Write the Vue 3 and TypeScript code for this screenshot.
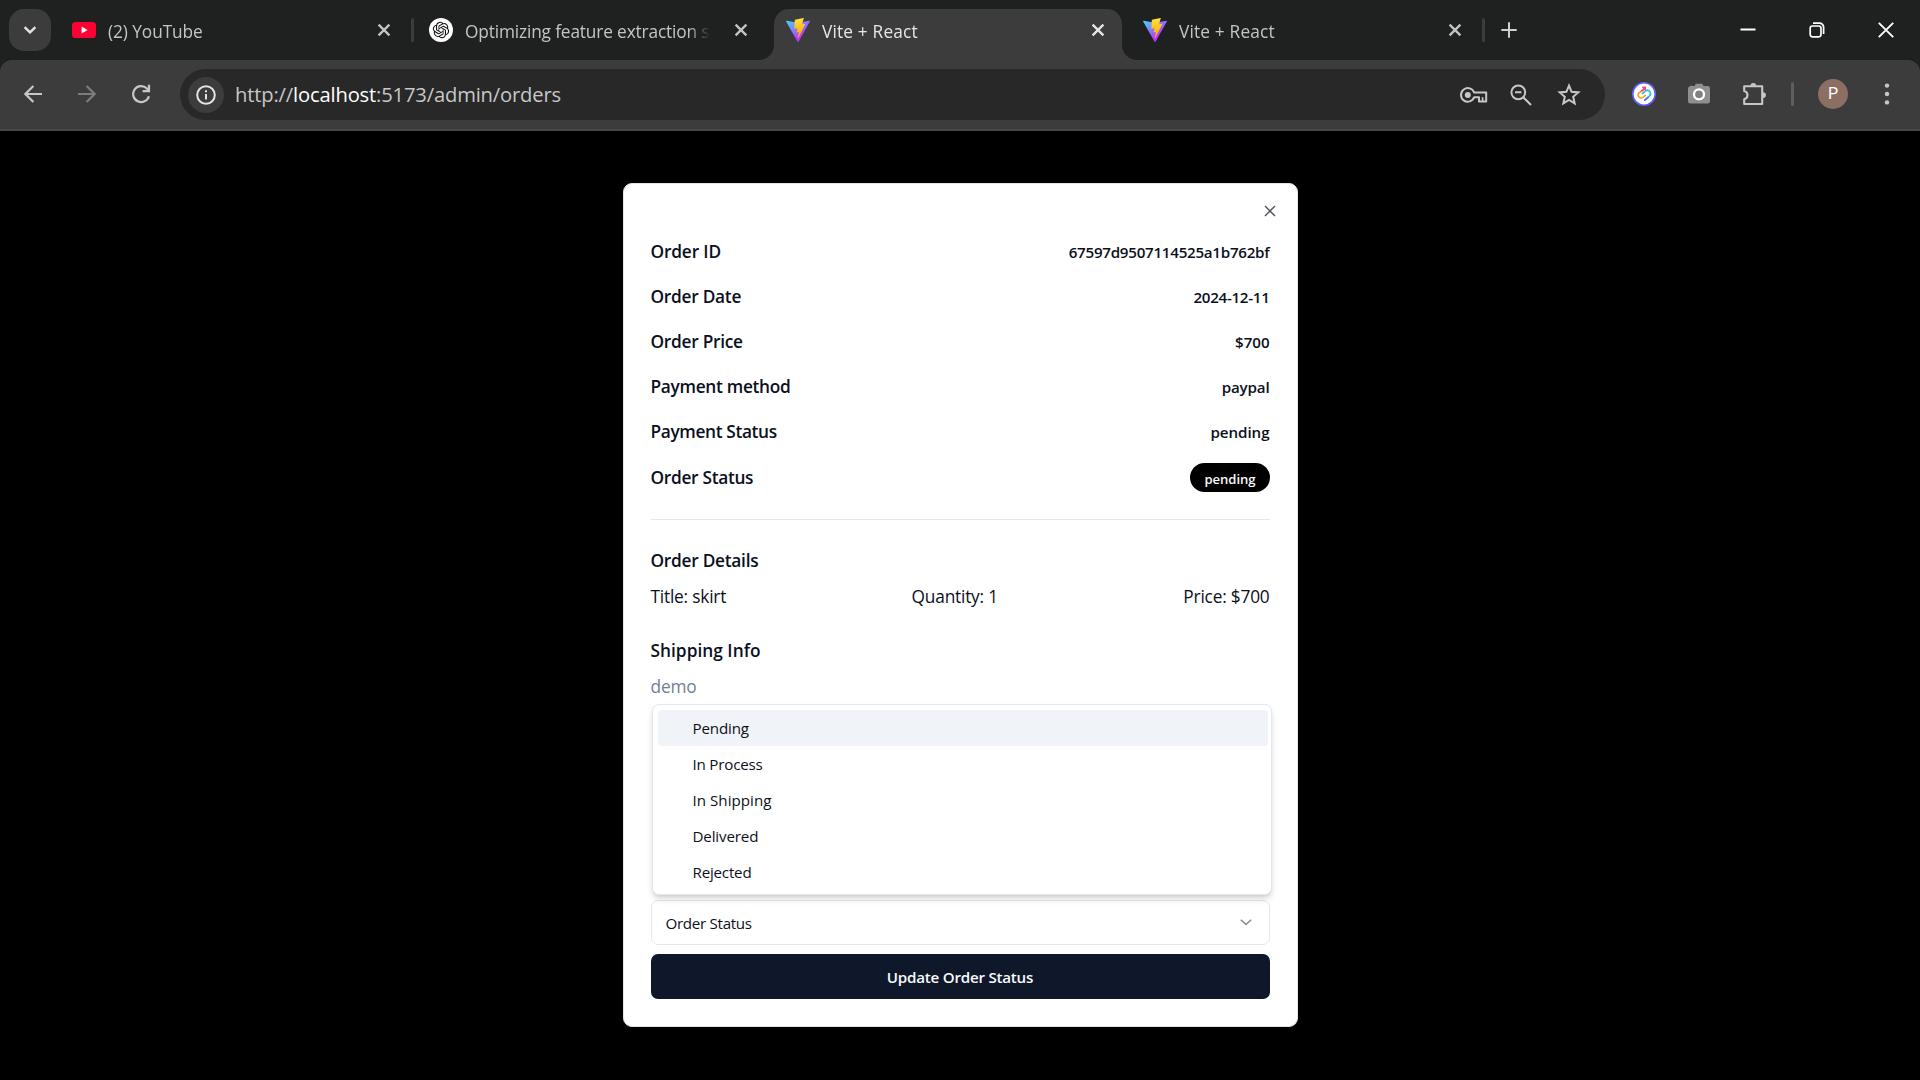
<script setup lang="ts">
type Icon = 'youtube' | 'openai' | 'vite'
interface Tab {
  title: string
  icon: Icon
  active?: boolean
  separator?: boolean
  track: string
}
interface Row {
  label: string
  value: string
  labelTrack: string
  valueTrack: string
}

const tabs: Tab[] = [
  { title: '(2) YouTube', icon: 'youtube', separator: true, track: 'track-10' },
  { title: 'Optimizing feature extraction speed', icon: 'openai', track: 'track-15' },
  { title: 'Vite + React', icon: 'vite', active: true, track: 'track-wide' },
  { title: 'Vite + React', icon: 'vite', separator: true, track: 'track-wide' },
]

const rows: Row[] = [
  { label: 'Order ID', value: '67597d9507114525a1b762bf', labelTrack: 'track-15', valueTrack: 'track-25' },
  { label: 'Order Date', value: '2024-12-11', labelTrack: 'track-25', valueTrack: 'track-30' },
  { label: 'Order Price', value: '$700', labelTrack: 'track-25', valueTrack: 'track-5' },
  { label: 'Payment method', value: 'paypal', labelTrack: 'track-30', valueTrack: 'track-15' },
  { label: 'Payment Status', value: 'pending', labelTrack: 'track-35', valueTrack: 'track-5' },
]

const options = [
  { text: 'Pending', track: 'track-15' },
  { text: 'In Process', track: 'track-20' },
  { text: 'In Shipping', track: 'track-0' },
  { text: 'Delivered', track: 'track-15' },
  { text: 'Rejected', track: 'track-20' },
]
</script>

<template>
  <div class="browser">
    <header class="tab-strip">
      <div class="tab-search">
        <svg width="14" height="8" viewBox="0 0 14 8"><path d="M1.6 1.2 7 6.4l5.4-5.2" fill="none" stroke="#e3e3e3" stroke-width="2.4" /></svg>
      </div>
      <div class="tabs">
        <div v-for="(tab, i) in tabs" :key="i" class="tab" :class="{ active: tab.active }">
          <svg v-if="tab.icon === 'youtube'" class="favicon" viewBox="0 0 24 24">
            <rect x="0" y="4" width="24" height="16" rx="3.6" fill="#ff0033" />
            <path d="M9.6 8.6v6.8l6-3.4z" fill="#fff" />
          </svg>
          <svg v-else-if="tab.icon === 'openai'" class="favicon" viewBox="0 0 24 24">
            <circle cx="12" cy="12" r="12" fill="#fff" />
            <path transform="translate(3.8 3.8) scale(.683)" fill="#111" d="M22.2819 9.8211a5.9847 5.9847 0 0 0-.5157-4.9108 6.0462 6.0462 0 0 0-6.5098-2.9A6.0651 6.0651 0 0 0 4.9807 4.1818a5.9847 5.9847 0 0 0-3.9977 2.9 6.0462 6.0462 0 0 0 .7427 7.0966 5.98 5.98 0 0 0 .511 4.9107 6.051 6.051 0 0 0 6.5146 2.9001A5.9847 5.9847 0 0 0 13.2599 24a6.0557 6.0557 0 0 0 5.7718-4.2058 5.9894 5.9894 0 0 0 3.9977-2.9001 6.0557 6.0557 0 0 0-.7475-7.0729zm-9.022 12.6081a4.4755 4.4755 0 0 1-2.8764-1.0408l.1419-.0804 4.7783-2.7582a.7948.7948 0 0 0 .3927-.6813v-6.7369l2.02 1.1686a.071.071 0 0 1 .038.052v5.5826a4.504 4.504 0 0 1-4.4945 4.4944zm-9.6607-4.1254a4.4708 4.4708 0 0 1-.5346-3.0137l.142.0852 4.783 2.7582a.7712.7712 0 0 0 .7806 0l5.8428-3.3685v2.3324a.0804.0804 0 0 1-.0332.0615L9.74 19.9502a4.4992 4.4992 0 0 1-6.1408-1.6464zM2.3408 7.8956a4.485 4.485 0 0 1 2.3655-1.9728V11.6a.7664.7664 0 0 0 .3879.6765l5.8144 3.3543-2.0201 1.1685a.0757.0757 0 0 1-.071 0l-4.8303-2.7865A4.504 4.504 0 0 1 2.3408 7.872zm16.5963 3.8558L13.1038 8.364 15.1192 7.2a.0757.0757 0 0 1 .071 0l4.8303 2.7913a4.4944 4.4944 0 0 1-.6765 8.1042v-5.6772a.79.79 0 0 0-.407-.667zm2.0107-3.0231l-.142-.0852-4.7735-2.7818a.7759.7759 0 0 0-.7854 0L9.409 9.2297V6.8974a.0662.0662 0 0 1 .0284-.0615l4.8303-2.7866a4.4992 4.4992 0 0 1 6.6802 4.66zM8.3065 12.863l-2.02-1.1638a.0804.0804 0 0 1-.038-.0567V6.0742a4.4992 4.4992 0 0 1 7.3757-3.4537l-.142.0805L8.704 5.459a.7948.7948 0 0 0-.3927.6813zm1.0976-2.3654l2.602-1.4998 2.6069 1.4998v2.9994l-2.5974 1.4997-2.6067-1.4997Z" />
          </svg>
          <svg v-else class="favicon" viewBox="0 0 256 257">
            <defs>
              <linearGradient :id="`va${i}`" x1="-.828%" x2="57.636%" y1="7.652%" y2="78.411%">
                <stop offset="0%" stop-color="#41d1ff" />
                <stop offset="100%" stop-color="#bd34fe" />
              </linearGradient>
              <linearGradient :id="`vb${i}`" x1="43.376%" x2="50.316%" y1="2.242%" y2="89.03%">
                <stop offset="0%" stop-color="#ffea83" />
                <stop offset="8.333%" stop-color="#ffdd35" />
                <stop offset="100%" stop-color="#ffa800" />
              </linearGradient>
            </defs>
            <path :fill="`url(#va${i})`" d="M255.153 37.938L134.897 252.976c-2.483 4.44-8.862 4.466-11.382.048L.875 37.958c-2.746-4.814 1.371-10.646 6.827-9.67l120.385 21.517a6.537 6.537 0 0 0 2.322-.004l117.867-21.483c5.438-.991 9.574 4.796 6.877 9.62Z" />
            <path :fill="`url(#vb${i})`" d="M185.432.063L96.44 17.501a3.268 3.268 0 0 0-2.634 3.014l-5.474 92.456a3.268 3.268 0 0 0 3.997 3.378l24.777-5.718c2.318-.535 4.413 1.507 3.936 3.838l-7.361 36.047c-.495 2.426 1.782 4.5 4.151 3.78l15.304-4.649c2.372-.72 4.652 1.36 4.15 3.788l-11.698 56.621c-.732 3.542 3.979 5.473 5.943 2.437l1.313-2.028l72.516-144.72c1.215-2.423-.88-5.186-3.54-4.672l-25.505 4.922c-2.396.462-4.435-1.77-3.759-4.114l16.646-57.705c.677-2.35-1.37-4.583-3.769-4.113Z" />
          </svg>
          <span class="tab-title" :class="tab.track">{{ tab.title }}</span>
          <svg class="tab-close" width="14" height="14" viewBox="0 0 14 14"><path d="M1.6 1.6l10.8 10.8M12.4 1.6 1.6 12.4" fill="none" stroke="currentColor" stroke-width="2.3" /></svg>
          <i v-if="tab.separator" class="tab-sep"></i>
        </div>
      </div>
      <svg class="new-tab" width="16" height="16" viewBox="0 0 16 16"><path d="M8 .3v15.4M.3 8h15.4" stroke="#d0d0d0" stroke-width="2" /></svg>
      <div class="window-controls">
        <svg width="16" height="16" viewBox="0 0 16 16"><path d="M.5 7.5h15" stroke="#fff" stroke-width="2" /></svg>
        <svg width="16" height="16" viewBox="0 0 16 16"><g fill="none" stroke="#fff" stroke-width="1.7"><rect x="1.2" y="4" width="10.8" height="10.8" rx="2.2" /><path d="M4 1.2h6.6a4 4 0 0 1 4 4V12" /></g></svg>
        <svg width="16" height="16" viewBox="0 0 16 16"><path d="M.8.8l14.4 14.4M15.2.8.8 15.2" fill="none" stroke="#fff" stroke-width="1.9" /></svg>
      </div>
    </header>

    <div class="toolbar-back">
      <nav class="toolbar">
        <div class="nav-icon">
          <svg width="18" height="18" viewBox="0 0 18 18"><path d="M18 9H1.8M9.4 1 1.4 9l8 8" fill="none" stroke="#c7c7c7" stroke-width="2.2" /></svg>
        </div>
        <div class="nav-icon">
          <svg width="18" height="18" viewBox="0 0 18 18"><path d="M0 9h16.2M8.6 1l8 8-8 8" fill="none" stroke="#7c7c7c" stroke-width="2.2" /></svg>
        </div>
        <div class="nav-icon">
          <svg width="20" height="20" viewBox="0 0 20 20"><path d="M17.9 12.2A8 8 0 1 1 15.9 4.5L18 6.6M18 .8v6.3h-6.4" fill="none" stroke="#c7c7c7" stroke-width="2.2" /></svg>
        </div>
        <div class="omnibox">
          <div class="site-info">
            <svg width="20" height="20" viewBox="0 0 20 20"><circle cx="10" cy="10" r="8.8" fill="none" stroke="#e3e3e3" stroke-width="2" /><path d="M10 9v5.4M10 5.2v2.1" stroke="#e3e3e3" stroke-width="2" /></svg>
          </div>
          <span class="url">http://<b>localhost</b>:5173/admin/orders</span>
          <svg class="key" width="28" height="16" viewBox="0 0 28 16"><g fill="none" stroke="#c7c7c7" stroke-width="2"><path d="M14.2 5.6A6.8 6.8 0 1 0 14.2 10.2H19V14.4H26.2V5.6Z" stroke-linejoin="round" /><path d="M22.6 14V10.2" stroke-width="1.7" /></g><circle cx="7.8" cy="8" r="3" fill="#c7c7c7" /></svg>
          <svg class="magnifier" width="22" height="22" viewBox="0 0 22 22"><g fill="none" stroke="#c7c7c7" stroke-width="2"><circle cx="8.3" cy="8.3" r="6.9" /><path d="M13.2 13.2l7.8 7.8M5 8.2h6.4" /></g></svg>
          <svg class="star" width="24" height="23" viewBox="0 0 24 23"><path d="M12 2.6l2.6 6.2 6.7.6-5.1 4.4 1.5 6.6-5.7-3.5-5.7 3.5 1.5-6.6-5.1-4.4 6.7-.6z" fill="none" stroke="#c7c7c7" stroke-width="2" /></svg>
        </div>
        <div class="ext-icon">
          <svg width="24" height="24" viewBox="0 0 24 24">
            <circle cx="12" cy="12" r="11.2" fill="#fff" stroke="#625df5" stroke-width="1.6" />
            <g fill="none" stroke-width="1.7" stroke-linecap="round">
              <path d="M12.6 6.6 8.2 10c-4.400 3-.6 8 3 5.200l2-1.700" stroke="#fba52c" />
              <path d="M12.6 6.6 9.600 9" stroke="#ff4f6d" />
              <path d="M12.800 18.200l4.300-3.800c3.600-3.400-.4-7.900-3.900-5.200l-2.600 2.300" stroke="#22c7e8" />
              <path d="M12.800 18.200l3.300-2.900" stroke="#5a6bff" />
            </g>
            <path d="M10.200 5.200l3.400-.3-.3 3.500z" fill="#ff3d8b" stroke="#ff3d8b" />
          </svg>
        </div>
        <div class="ext-icon">
          <svg width="24" height="22" viewBox="0 0 24 22"><path d="M7.6 3 8.8.8h6.4L16.6 3h4a2.400 2.400 0 0 1 2.400 2.400v12.800a2.400 2.400 0 0 1-2.400 2.400H3.400A2.400 2.400 0 0 1 1 18.200V5.400A2.400 2.400 0 0 1 3 3.200L4.400 2.600 5.600 3z" fill="#8f8f8f" /><circle cx="12" cy="11.300" r="5" fill="#808080" stroke="#fff" stroke-width="2.300" /></svg>
        </div>
        <div class="ext-icon">
          <svg width="26" height="26" viewBox="0 0 26 26"><path d="M3.200 5.200H21.200V23H3.200V18.200a4.200 4.200 0 0 0 0-8.200Z" fill="none" stroke="#c7c7c7" stroke-width="2.100" stroke-linejoin="round" /><path d="M9.400 4.800a2.900 2.900 0 0 1 5.800 0zM22 11.200a2.900 2.900 0 0 1 0 5.800z" fill="#c7c7c7" /></svg>
        </div>
        <i class="bar-sep"></i>
        <div class="avatar">P</div>
        <svg class="kebab" width="6" height="22" viewBox="0 0 6 22"><g fill="#c7c7c7"><circle cx="3" cy="2.600" r="2.200" /><circle cx="3" cy="11" r="2.200" /><circle cx="3" cy="19.400" r="2.200" /></g></svg>
      </nav>
    </div>

    <main class="page">
      <section class="dialog">
        <svg class="dialog-close" width="12" height="12" viewBox="0 0 12 12"><path d="M1 1l10 10M11 1 1 11" fill="none" stroke="#4d505c" stroke-width="1.400" /></svg>
        <div class="summary">
          <div v-for="row in rows" :key="row.label" class="row">
            <span class="label" :class="row.labelTrack">{{ row.label }}</span>
            <span class="value" :class="row.valueTrack">{{ row.value }}</span>
          </div>
          <div class="row">
            <span class="label track-30">Order Status</span>
            <span class="badge">pending</span>
          </div>
        </div>
        <hr />
        <div class="block">
          <h3 class="label track-25">Order Details</h3>
          <div class="item">
            <span class="track-20">Title: skirt</span>
            <span class="track-20">Quantity: 1</span>
            <span class="track-20">Price: $700</span>
          </div>
        </div>
        <div class="block">
          <h3 class="label track-0">Shipping Info</h3>
          <div class="muted track-15">demo</div>
        </div>
        <div class="form">
          <div class="select">
            <span class="select-text track-30">Order Status</span>
            <svg width="12" height="7" viewBox="0 0 12 7"><path d="M.8.8 6 5.600 11.200.8" fill="none" stroke="#868992" stroke-width="1.500" /></svg>
            <ul class="menu">
              <li v-for="(o, i) in options" :key="o.text" :class="[o.track, { hover: i === 0 }]">{{ o.text }}</li>
            </ul>
          </div>
          <button type="button">Update Order Status</button>
        </div>
      </section>
    </main>
  </div>
</template>

<style>
body {
  margin: 0;
  background: #000;
}
</style>

<style scoped>
.browser {
  display: flex;
  flex-direction: column;
  width: 1920px;
  height: 1080px;
  overflow: hidden;
  background: #000;
  font-family: 'Open Sans', 'Noto Sans', sans-serif;
}
svg { display: block; flex: none; }

.track-wide { letter-spacing: 0.17px; }
.track-0 { letter-spacing: 0.02px; }
.track-5 { letter-spacing: -0.06px; }
.track-10 { letter-spacing: -0.08px; }
.track-15 { letter-spacing: -0.15px; }
.track-20 { letter-spacing: -0.2px; }
.track-25 { letter-spacing: -0.26px; }
.track-30 { letter-spacing: -0.3px; }
.track-35 { letter-spacing: -0.36px; }

/* Tab strip */
.tab-strip {
  display: flex;
  flex: none;
  height: 60px;
  background: #1f2120;
}
.tab-search {
  display: flex;
  align-items: center;
  justify-content: center;
  width: 42px;
  height: 42px;
  margin: 9px;
  border-radius: 15px;
  background: #3c3c3c;
}
.tabs { display: flex; }
.tab {
  position: relative;
  display: flex;
  align-items: center;
  box-sizing: border-box;
  width: 348px;
  height: 51px;
  margin: 9px 9px 0 0;
  padding: 0 17px 9px 12px;
  color: #c3c5c4;
}
.tab.active {
  border-radius: 15px 15px 0 0;
  background: #3c3c3c;
  color: #e6e6e6;
}
.tab.active::before,
.tab.active::after {
  content: '';
  position: absolute;
  bottom: 0;
  width: 15px;
  height: 15px;
}
.tab.active::before {
  left: -15px;
  background: radial-gradient(circle at 0 0, transparent 14.500px, #3c3c3c 15.500px);
}
.tab.active::after {
  right: -15px;
  background: radial-gradient(circle at 100% 0, transparent 14.500px, #3c3c3c 15.500px);
}
.favicon {
  width: 24px;
  height: 24px;
}
.tab-title {
  flex: 1;
  margin: 4px 18px 0 12px;
  overflow: hidden;
  white-space: nowrap;
  font-size: 17.300px;
  line-height: 26px;
  -webkit-mask-image: linear-gradient(90deg, #000 calc(100% - 28px), transparent calc(100% - 6px));
  mask-image: linear-gradient(90deg, #000 calc(100% - 28px), transparent calc(100% - 6px));
}
.tab-sep {
  position: absolute;
  top: 9px;
  right: -6px;
  width: 3px;
  height: 24px;
  border-radius: 2px;
  background: #3c3c3c;
}
.new-tab { margin: 22px 0 0 13px; }
.window-controls {
  display: flex;
  gap: 53px;
  margin: 21.500px 26.500px 0 auto;
}

/* Toolbar */
.toolbar-back {
  flex: none;
  background: #1f2120;
}
.toolbar {
  display: flex;
  align-items: center;
  box-sizing: border-box;
  height: 71px;
  padding: 0 30px 1px 6px;
  border-bottom: 2px solid #474747;
  border-radius: 12px 12px 0 0;
  background: #3c3c3c;
}
.nav-icon,
.ext-icon {
  display: flex;
  align-items: center;
  justify-content: center;
  width: 54px;
}
.ext-icon { width: 54.700px; }
.omnibox {
  display: flex;
  align-items: center;
  box-sizing: border-box;
  width: 1425px;
  height: 51px;
  margin: 1px 12px 0;
  padding: 0 24px 0 7.500px;
  border-radius: 26px;
  background: #282828;
}
.site-info {
  display: flex;
  align-items: center;
  justify-content: center;
  width: 36px;
  height: 36px;
  border-radius: 50%;
  background: #3c3c3c;
}
.url {
  flex: 1;
  margin: -2px 0 0 11.500px;
  font-size: 20.200px;
  letter-spacing: -0.17px;
  line-height: 30px;
  color: #c7c7c7;
}
.url b {
  font-weight: 400;
  color: #fff;
}
.key { margin-right: 22px; }
.magnifier { margin-right: 25px; }
.bar-sep {
  width: 3px;
  height: 24px;
  margin-left: 10px;
  border-radius: 2px;
  background: #5e5e5e;
}
.avatar {
  width: 30px;
  height: 30px;
  margin-left: 24px;
  border-radius: 50%;
  background: #8d6e63;
  color: #fff;
  font: 16px/30px Roboto, sans-serif;
  text-align: center;
}
.kebab { margin-left: auto; }

/* Dialog */
.page {
  display: flex;
  flex: 1;
  justify-content: center;
  align-items: flex-start;
  padding-top: 51.500px;
}
.dialog {
  position: relative;
  display: flex;
  flex-direction: column;
  box-sizing: border-box;
  width: 675px;
  height: 844px;
  padding: 54.500px 27px 27px;
  border: 1px solid #dfe5ec;
  border-radius: 9px;
  background: #fff;
  color: #0b1020;
  font-size: 17.300px;
  line-height: 27px;
}
.dialog-close {
  position: absolute;
  top: 21.500px;
  right: 21px;
}
.summary {
  display: flex;
  flex-direction: column;
  gap: 18px;
}
.row,
.item {
  display: flex;
  align-items: center;
  justify-content: space-between;
}
.label {
  margin: 0;
  font-size: 17.300px;
  font-weight: 600;
  line-height: 27px;
}
.value {
  font-size: 15.150px;
  font-weight: 600;
  line-height: 25px;
  padding-top: 2px;
}
.badge {
  box-sizing: border-box;
  height: 29px;
  padding: 2.500px 14px 0 15px;
  border-radius: 15px;
  background: #000;
  color: #f8fafc;
  font-size: 13.100px;
  font-weight: 600;
  letter-spacing: -0.06px;
  line-height: 26px;
}
hr {
  width: 100%;
  height: 1px;
  margin: 27px 0;
  border: 0;
  background: #e2e8f0;
}
.block {
  display: flex;
  flex-direction: column;
  gap: 9px;
  margin-bottom: 27px;
}
.muted { color: #718096; }
.form {
  display: flex;
  flex-direction: column;
  gap: 9px;
  margin-top: auto;
}
.select {
  position: relative;
  display: flex;
  align-items: center;
  justify-content: space-between;
  box-sizing: border-box;
  height: 45px;
  padding: 0 17px 0 14px;
  border: 1px solid #e2e8f0;
  border-radius: 7px;
  font-size: 15.150px;
}
.select-text { padding-top: 2px; }
.menu {
  position: absolute;
  left: 0;
  bottom: 48.500px;
  box-sizing: border-box;
  width: 620.500px;
  margin: 0;
  padding: 4.500px 3.500px 4.500px 5px;
  border: 1px solid #e2e8f0;
  border-radius: 7px;
  background: #fff;
  box-shadow: 0 4.500px 7px -1px rgba(0, 0, 0, 0.14), 0 2px 4.500px -2px rgba(0, 0, 0, 0.14);
  list-style: none;
}
.menu li {
  padding-left: 35px;
  border-radius: 4px;
  line-height: 36px;
}
.menu li.hover { background: #f0f3f8; }
button {
  height: 45px;
  padding: 0;
  border: 0;
  border-radius: 7px;
  background: #0f172a;
  color: #f8fafc;
  font: 600 15.150px/46px 'Open Sans', 'Noto Sans', sans-serif;
  letter-spacing: -0.23px;
}
</style>
